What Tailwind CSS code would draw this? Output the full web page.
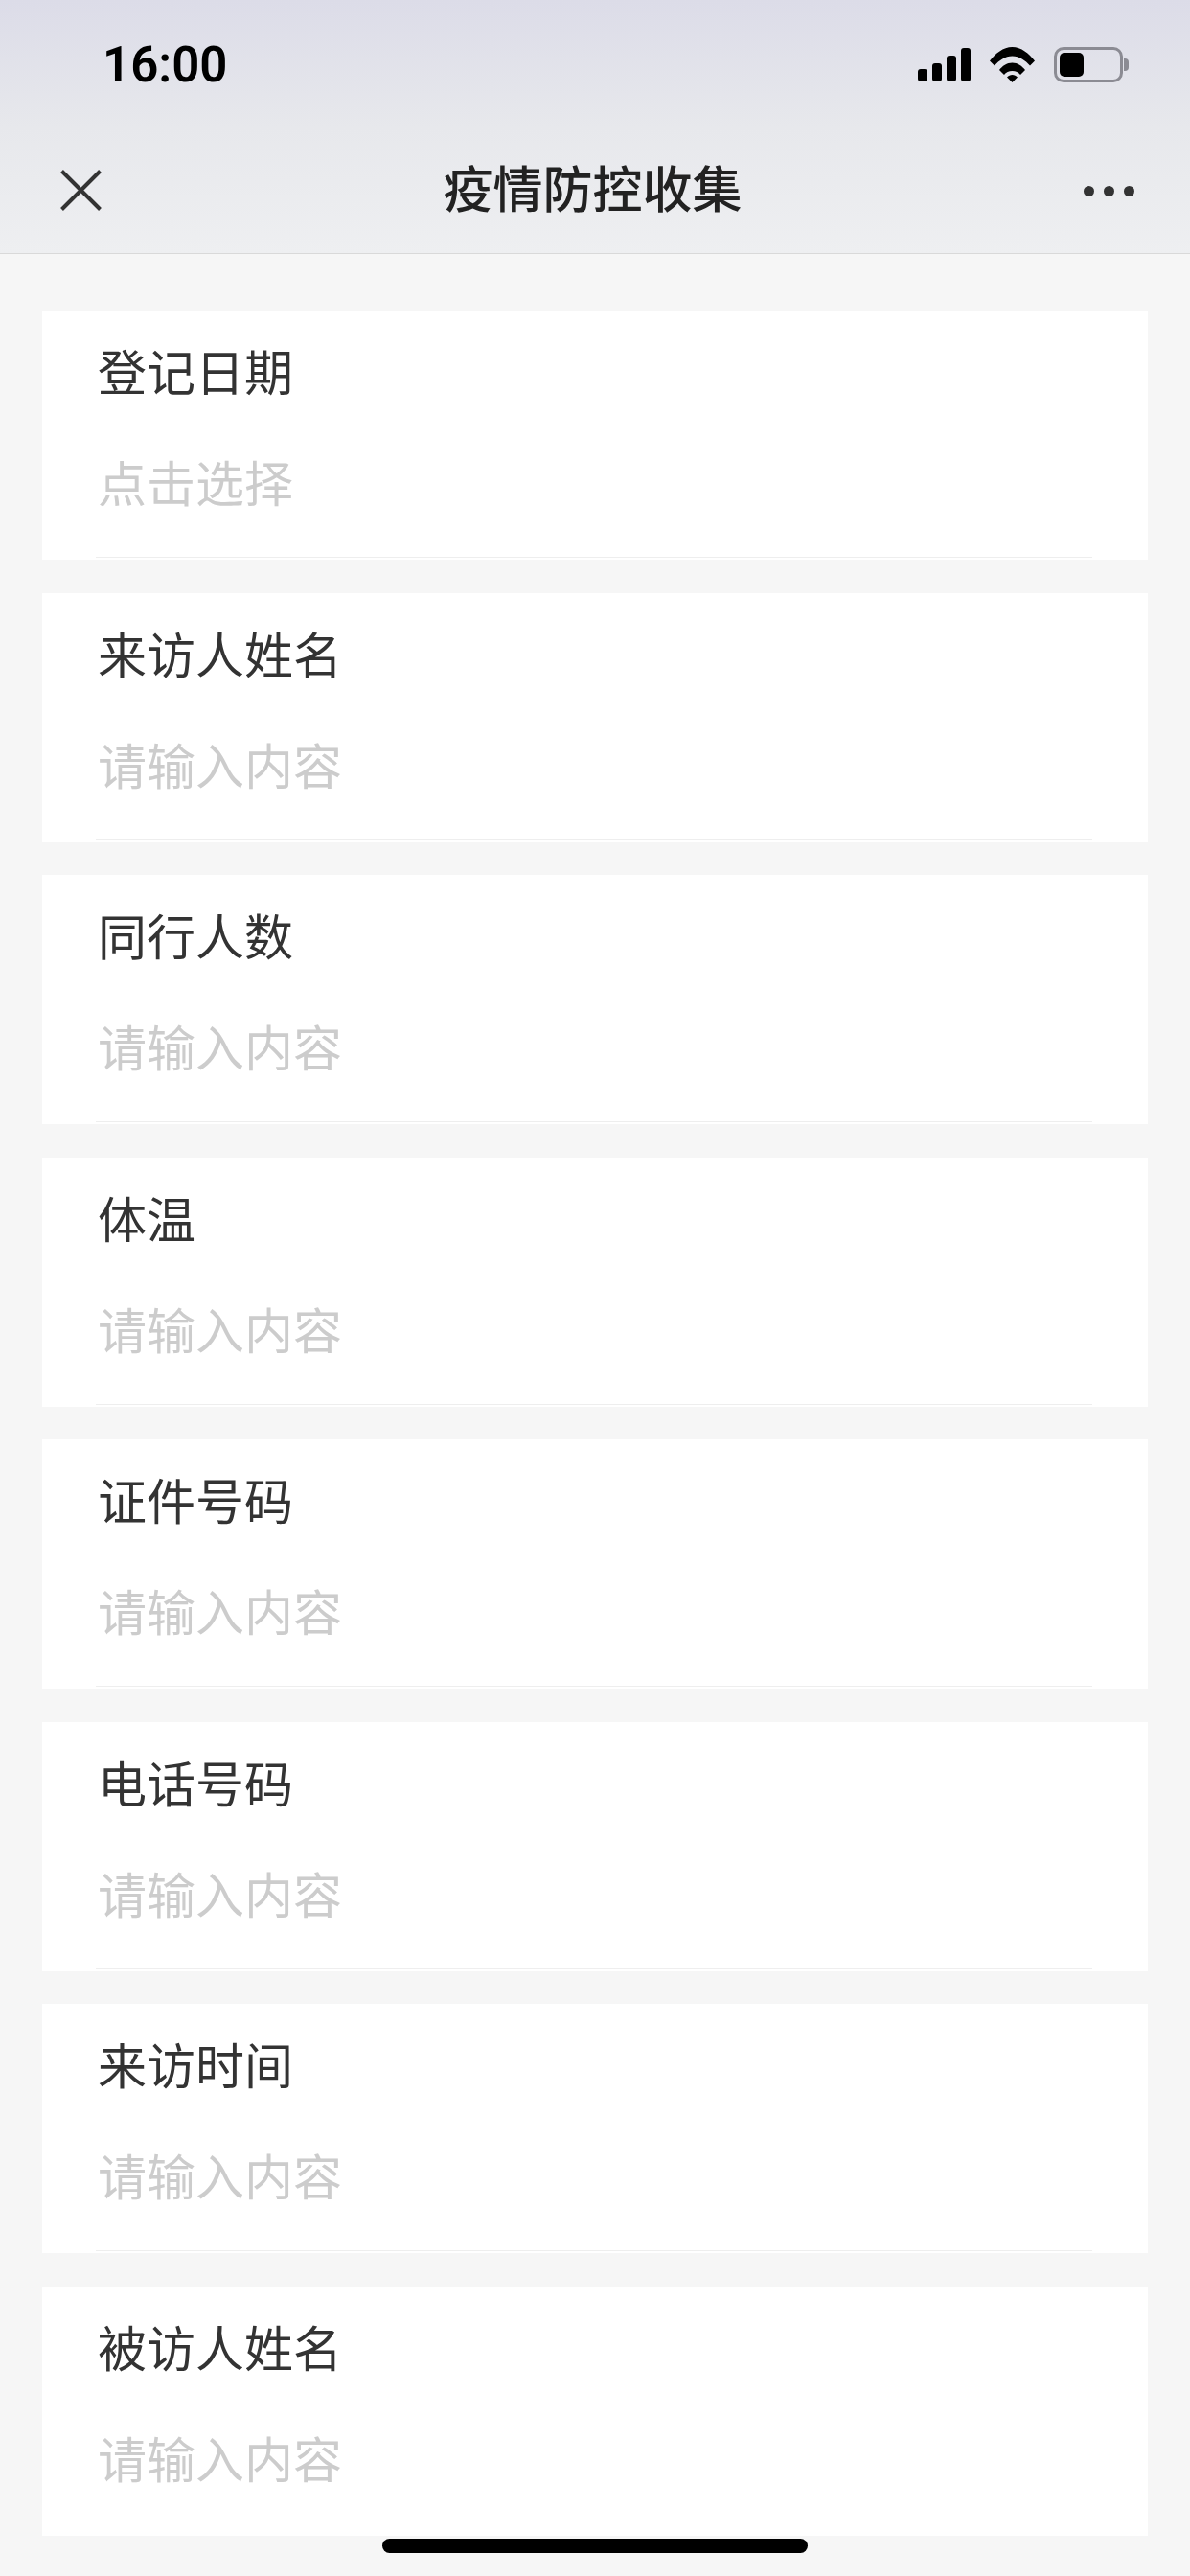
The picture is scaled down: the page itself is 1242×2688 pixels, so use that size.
<!DOCTYPE html>
<html lang="zh-CN">

<head>
  <meta charset="UTF-8" />
  <meta name="viewport" content="width=device-width, initial-scale=1.0" />
  <title>疫情防控收集</title>
  <script src="https://cdn.jsdelivr.net/npm/@tailwindcss/browser@4"></script>
</head>

<body class="bg-[#f6f6f6] font-['Noto_Sans_CJK_SC',sans-serif]">
  <div class="relative w-[1242px] h-[2688px] overflow-hidden">
    <!-- status bar + nav -->
    <header class="h-[265px] border-b border-[#d9d9d9] bg-gradient-to-b from-[#dcdce8] via-[#e7e8ec] to-[#eeeff1]">
      <div class="h-[134px] pl-[107px] pr-[64px] flex items-start justify-between">
        <span class="mt-[39px] text-[51px] leading-[58px] font-semibold text-black font-['Roboto',sans-serif]">16:00</span>
        <div class="mt-[49px] flex items-start">
          <svg width="55" height="36" viewBox="0 0 55 36" class="mr-[20px]">
            <rect x="0" y="23" width="10" height="13" rx="3" />
            <rect x="15" y="17" width="10" height="19" rx="3" />
            <rect x="30" y="9" width="10" height="27" rx="3" />
            <rect x="45" y="1" width="10" height="35" rx="3" />
          </svg>
          <svg width="47" height="37" viewBox="0 0 47 37" class="mr-[20px]">
            <path d="M0 14.500C6 7 14 0 23.500 0S41 7 47 14.500l-5 5C37 14 31 9.500 23.500 9.500S10 14 5 19.500Z" />
            <path d="M10 24C13 20 18 16.500 23.500 16.500S34 20 37 24l-5 5C30 26.500 27 25 23.500 25S17 26.500 15 29Z" />
            <path d="M18 31.500C19.500 30 21.500 29 23.500 29S27.500 30 29 31.500L23.500 37Z" />
          </svg>
          <div class="flex items-center">
            <div class="w-[72px] h-[37px] border-[3px] border-[#8b8b93] rounded-[10px] p-[3px]">
              <div class="w-[25px] h-full bg-black rounded-[5px]"></div>
            </div>
            <div class="ml-[1px] w-[5px] h-[13px] bg-[#8b8b93] rounded-r-[4px]"></div>
          </div>
        </div>
      </div>
      <div class="h-[130px] pl-[63px] pr-[58px] flex items-center justify-between -mt-[1px]">
        <svg width="43" height="43" viewBox="0 0 43 43" class="mt-[1px]" fill="none" stroke="#333" stroke-width="4">
          <path d="M1.500 1.500l40 40M41.500 1.500l-40 40" />
        </svg>
        <h1 class="-mt-[7px] text-[52px] leading-[70px] font-medium text-[#222]">疫情防控收集</h1>
        <div class="flex gap-[10px] mt-[3px]">
          <span class="w-[11px] h-[11px] rounded-full bg-[#333]"></span>
          <span class="w-[11px] h-[11px] rounded-full bg-[#333]"></span>
          <span class="w-[11px] h-[11px] rounded-full bg-[#333]"></span>
        </div>
      </div>
    </header>

    <!-- form -->
    <main class="px-[44px] pt-[59px] flex flex-col gap-[34.570px]">
      <section class="h-[260px] bg-white pl-[56px] pr-[58px] pt-[28px]">
        <div class="h-[230px] flex flex-col border-b border-[#eeeeee]">
          <p class="pl-[2px] text-[51px] leading-[68px] text-[#333]">登记日期</p>
          <p class="pl-[2px] mt-[48px] text-[51px] leading-[68px] text-[#cccccc]">点击选择</p>
        </div>
      </section>
      <section class="h-[260px] bg-white pl-[56px] pr-[58px] pt-[28px]">
        <div class="h-[230px] flex flex-col border-b border-[#eeeeee]">
          <p class="pl-[2px] text-[51px] leading-[68px] text-[#333]">来访人姓名</p>
          <p class="pl-[2px] mt-[48px] text-[51px] leading-[68px] text-[#cccccc]">请输入内容</p>
        </div>
      </section>
      <section class="h-[260px] bg-white pl-[56px] pr-[58px] pt-[28px]">
        <div class="h-[230px] flex flex-col border-b border-[#eeeeee]">
          <p class="pl-[2px] text-[51px] leading-[68px] text-[#333]">同行人数</p>
          <p class="pl-[2px] mt-[48px] text-[51px] leading-[68px] text-[#cccccc]">请输入内容</p>
        </div>
      </section>
      <section class="h-[260px] bg-white pl-[56px] pr-[58px] pt-[28px]">
        <div class="h-[230px] flex flex-col border-b border-[#eeeeee]">
          <p class="pl-[2px] text-[51px] leading-[68px] text-[#333]">体温</p>
          <p class="pl-[2px] mt-[48px] text-[51px] leading-[68px] text-[#cccccc]">请输入内容</p>
        </div>
      </section>
      <section class="h-[260px] bg-white pl-[56px] pr-[58px] pt-[28px]">
        <div class="h-[230px] flex flex-col border-b border-[#eeeeee]">
          <p class="pl-[2px] text-[51px] leading-[68px] text-[#333]">证件号码</p>
          <p class="pl-[2px] mt-[48px] text-[51px] leading-[68px] text-[#cccccc]">请输入内容</p>
        </div>
      </section>
      <section class="h-[260px] bg-white pl-[56px] pr-[58px] pt-[28px]">
        <div class="h-[230px] flex flex-col border-b border-[#eeeeee]">
          <p class="pl-[2px] text-[51px] leading-[68px] text-[#333]">电话号码</p>
          <p class="pl-[2px] mt-[48px] text-[51px] leading-[68px] text-[#cccccc]">请输入内容</p>
        </div>
      </section>
      <section class="h-[260px] bg-white pl-[56px] pr-[58px] pt-[28px]">
        <div class="h-[230px] flex flex-col border-b border-[#eeeeee]">
          <p class="pl-[2px] text-[51px] leading-[68px] text-[#333]">来访时间</p>
          <p class="pl-[2px] mt-[48px] text-[51px] leading-[68px] text-[#cccccc]">请输入内容</p>
        </div>
      </section>
      <section class="h-[260px] bg-white pl-[56px] pr-[58px] pt-[28px]">
        <div class="h-[230px] flex flex-col">
          <p class="pl-[2px] text-[51px] leading-[68px] text-[#333]">被访人姓名</p>
          <p class="pl-[2px] mt-[48px] text-[51px] leading-[68px] text-[#cccccc]">请输入内容</p>
        </div>
      </section>
    </main>

    <!-- home indicator -->
    <div class="absolute left-[399px] top-[2649px] w-[444px] h-[15px] rounded-full bg-black"></div>
  </div>
</body>

</html>
